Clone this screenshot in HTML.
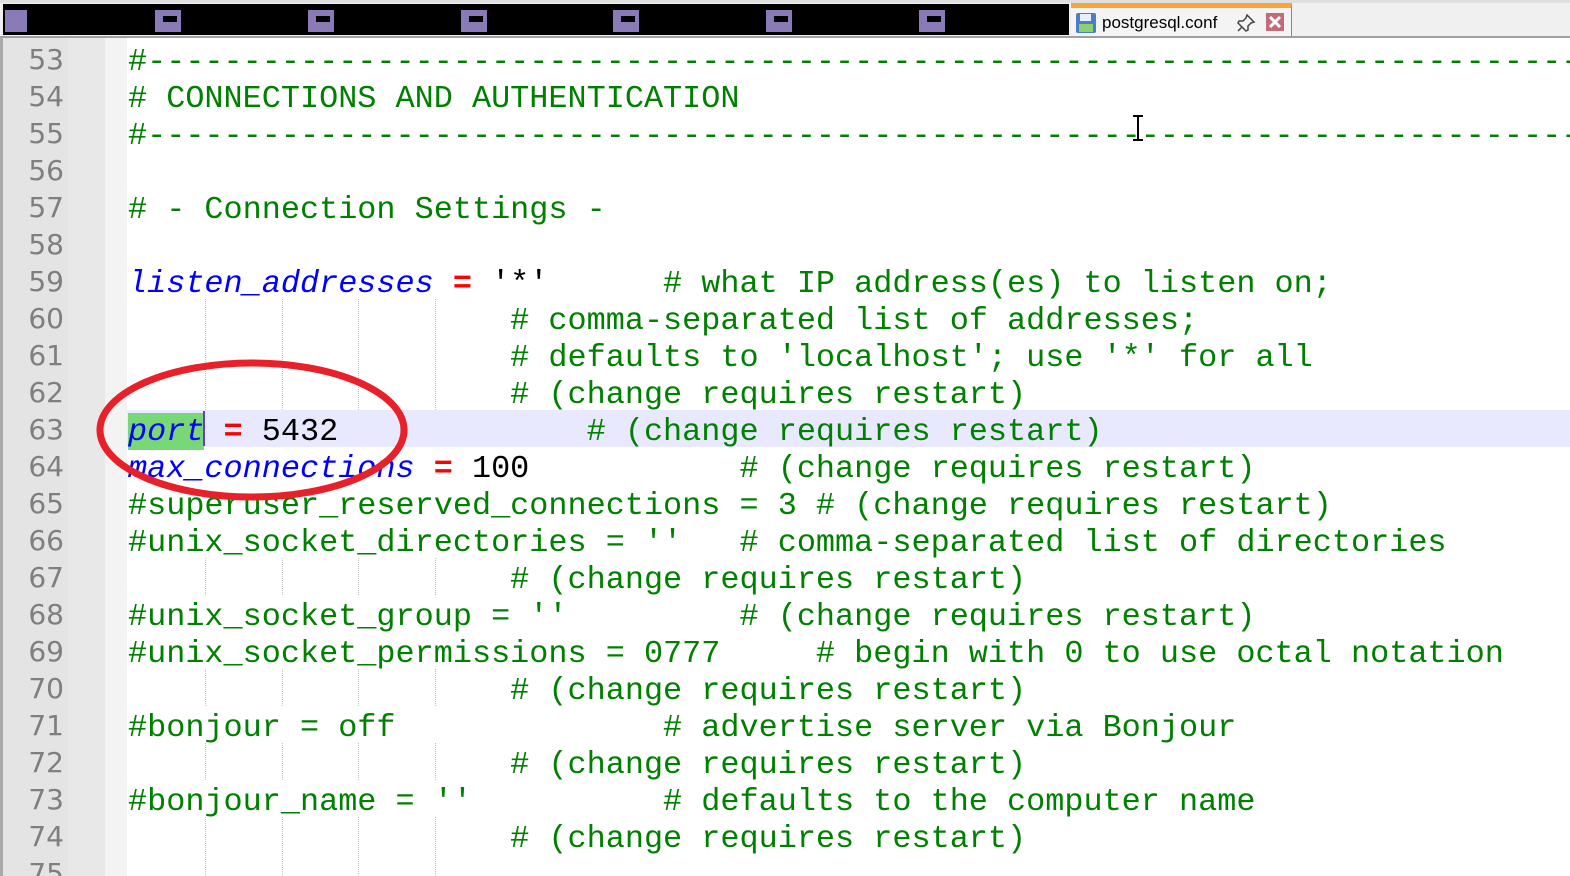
<!DOCTYPE html>
<html><head><meta charset="utf-8"><style>
html,body{margin:0;padding:0;width:1570px;height:876px;overflow:hidden;background:#fff;position:relative}
.tabbar{position:absolute;left:0;top:0;width:1570px;height:38px;background:#f0f0f0;border-top:3px solid #e0e0e0;box-sizing:border-box;border-bottom:2px solid #a0a0a0}
.black{position:absolute;left:3px;top:4px;width:1066px;height:31px;background:#000}
.tab{position:absolute;left:1071px;top:3px;width:221px;height:33px;background:#f4f4f4;border-top:5px solid #f8a53c;border-right:1px solid #888;box-sizing:border-box;font:17px "Liberation Sans",sans-serif;color:#000}
.gut{position:absolute;left:0;top:38px;width:105px;height:838px;background:#e4e4e4;border-left:3px solid #aaa;box-sizing:border-box}
.gut2{position:absolute;left:68px;top:38px;width:37px;height:838px;background:#e8e8e8}
.fold{position:absolute;left:105px;top:38px;width:22px;height:838px;background:#f3f3f3}
.ln{position:absolute;left:0;width:64px;text-align:right;font:28px "DejaVu Sans",sans-serif;color:#7f7f7f}
.code{position:absolute;left:128px;top:43px;font:31.85px "Liberation Mono",monospace;white-space:pre;color:#008000;line-height:37px}
.code div{height:37px}
.b{color:#0000ff;font-style:italic}
.r{color:#ff0000;font-weight:bold}
.k{color:#000}
.hl{position:absolute;left:127px;top:410px;width:1443px;height:37px;background:#e8e8ff}
.guide{position:absolute;width:0;border-left:1px dotted #c0c0c0}
</style></head><body>
<div class="tabbar"></div>
<div class="black"></div>
<svg style="position:absolute;left:3px;top:8px" width="1000" height="28">
<g fill="#8a7ab8"><rect x="2" y="2" width="22" height="22"/><rect x="152" y="2" width="26" height="22"/><rect x="305" y="2" width="26" height="22"/><rect x="458" y="2" width="26" height="22"/><rect x="610" y="2" width="26" height="22"/><rect x="763" y="2" width="26" height="22"/><rect x="916" y="2" width="26" height="22"/></g>
<g fill="#000"><rect x="160" y="8" width="14" height="6"/><rect x="313" y="8" width="14" height="6"/><rect x="466" y="8" width="14" height="6"/><rect x="618" y="8" width="14" height="6"/><rect x="771" y="8" width="14" height="6"/><rect x="924" y="8" width="14" height="6"/></g>
</svg>
<div class="tab">
<svg style="position:absolute;left:4px;top:4px" width="22" height="22"><rect x="1" y="1" width="20" height="20" rx="2" fill="#4a7fc8"/><rect x="5" y="2" width="11" height="7" fill="#e8f0ff"/><rect x="4" y="12" width="14" height="8" fill="#8cd070"/></svg>
<span style="position:absolute;left:31px;top:5px">postgresql.conf</span>
<svg style="position:absolute;left:165px;top:5px" width="20" height="20"><path d="M11 2l7 7-3 1-3 3 0 4-2 1-8-8 1-2 4 0 3-3z" fill="none" stroke="#444" stroke-width="1.5"/><path d="M6 14l-4 4" stroke="#444" stroke-width="1.5"/></svg>
<svg style="position:absolute;left:195px;top:5px" width="18" height="18"><rect width="18" height="18" fill="#c46a7a"/><path d="M4 4L14 14M14 4L4 14" stroke="#fff" stroke-width="3"/></svg>
</div>
<div class="gut"></div><div class="gut2"></div><div class="fold"></div>
<div class="hl"></div>
<div class="guide" style="left:205px;top:299px;height:111px"></div>
<div class="guide" style="left:282px;top:299px;height:111px"></div>
<div class="guide" style="left:358px;top:299px;height:111px"></div>
<div class="guide" style="left:435px;top:299px;height:111px"></div>
<div class="guide" style="left:205px;top:558px;height:37px"></div><div class="guide" style="left:282px;top:558px;height:37px"></div><div class="guide" style="left:358px;top:558px;height:37px"></div><div class="guide" style="left:435px;top:558px;height:37px"></div>
<div class="guide" style="left:205px;top:669px;height:37px"></div><div class="guide" style="left:282px;top:669px;height:37px"></div><div class="guide" style="left:358px;top:669px;height:37px"></div><div class="guide" style="left:435px;top:669px;height:37px"></div>
<div class="guide" style="left:205px;top:743px;height:37px"></div><div class="guide" style="left:282px;top:743px;height:37px"></div><div class="guide" style="left:358px;top:743px;height:37px"></div><div class="guide" style="left:435px;top:743px;height:37px"></div>
<div class="guide" style="left:205px;top:817px;height:59px"></div><div class="guide" style="left:282px;top:817px;height:59px"></div><div class="guide" style="left:358px;top:817px;height:59px"></div><div class="guide" style="left:435px;top:817px;height:59px"></div>
<div class="ln" style="top:43px">53</div><div class="ln" style="top:80px">54</div><div class="ln" style="top:117px">55</div><div class="ln" style="top:154px">56</div><div class="ln" style="top:191px">57</div><div class="ln" style="top:228px">58</div><div class="ln" style="top:265px">59</div><div class="ln" style="top:302px">60</div><div class="ln" style="top:339px">61</div><div class="ln" style="top:376px">62</div><div class="ln" style="top:413px">63</div><div class="ln" style="top:450px">64</div><div class="ln" style="top:487px">65</div><div class="ln" style="top:524px">66</div><div class="ln" style="top:561px">67</div><div class="ln" style="top:598px">68</div><div class="ln" style="top:635px">69</div><div class="ln" style="top:672px">70</div><div class="ln" style="top:709px">71</div><div class="ln" style="top:746px">72</div><div class="ln" style="top:783px">73</div><div class="ln" style="top:820px">74</div><div class="ln" style="top:857px">75</div>
<div class="code"><div>#---------------------------------------------------------------------------</div><div># CONNECTIONS AND AUTHENTICATION</div><div>#---------------------------------------------------------------------------</div><div> </div><div># - Connection Settings -</div><div> </div><div><span class="b">listen_addresses</span> <span class="r">=</span> <span class="k">'*'</span>      # what IP address(es) to listen on;</div><div>                    # comma-separated list of addresses;</div><div>                    # defaults to 'localhost'; use '*' for all</div><div>                    # (change requires restart)</div><div><span class="b" style="background:#78d878">port</span> <span class="r">=</span> <span class="k">5432</span>             # (change requires restart)</div><div><span class="b">max_connections</span> <span class="r">=</span> <span class="k">100</span>           # (change requires restart)</div><div>#superuser_reserved_connections = 3 # (change requires restart)</div><div>#unix_socket_directories = ''   # comma-separated list of directories</div><div>                    # (change requires restart)</div><div>#unix_socket_group = ''         # (change requires restart)</div><div>#unix_socket_permissions = 0777     # begin with 0 to use octal notation</div><div>                    # (change requires restart)</div><div>#bonjour = off              # advertise server via Bonjour</div><div>                    # (change requires restart)</div><div>#bonjour_name = ''          # defaults to the computer name</div><div>                    # (change requires restart)</div></div>
<div style="position:absolute;left:203px;top:411px;width:2px;height:35px;background:#6040c0"></div>
<svg style="position:absolute;left:0;top:0" width="1570" height="876">
<ellipse cx="252" cy="430" rx="152" ry="67" fill="none" stroke="#e8202a" stroke-width="7"/>
<path d="M1133 116h10M1138 116v24M1133 140h10" stroke="#000" stroke-width="2" fill="none"/>
</svg>
</body></html>
